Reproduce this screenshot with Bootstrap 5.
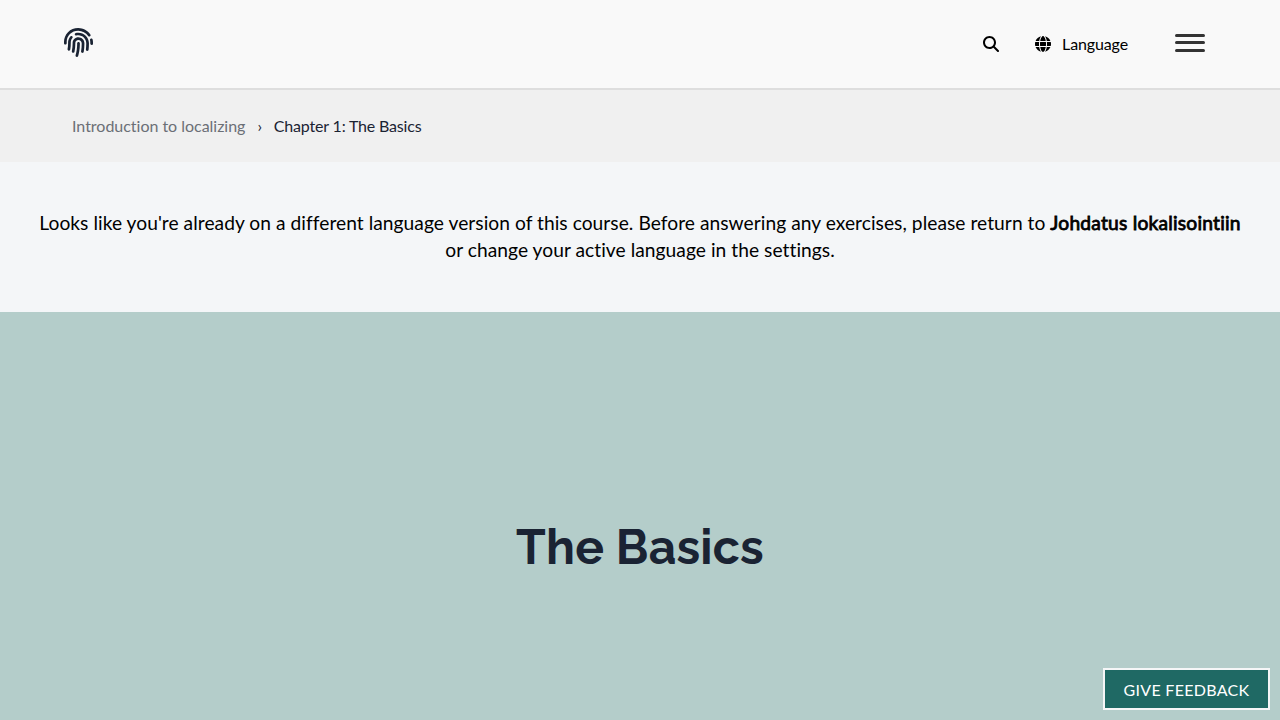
<!DOCTYPE html>
<html lang="en">
<head>
<meta charset="utf-8">
<meta name="viewport" content="width=device-width, initial-scale=1">
<title>The Basics</title>
<link href="https://cdn.jsdelivr.net/npm/bootstrap@5.3.0/dist/css/bootstrap.min.css" rel="stylesheet">
<style>
body { font-family: "Lato", sans-serif; font-size: 16px; color: #000; background: #b4cdca; font-variant-ligatures: none; }
a, .btn { color: inherit; }
svg { display: block; fill: currentColor; }
.topbar { height: 90px; background: #f9f9f9; border-bottom: 2px solid #dedede; padding: 0 75px 0 64px; }
.logo { color: #1a2333; margin-top: -3px; }
.search-btn { margin-right: 36px; }
.lang-btn { gap: 11px; margin-right: 47px; line-height: 24px; letter-spacing: -.12px; }
.menu-btn { width: 30px; margin-top: -2px; }
.menu-btn span { height: 3px; border-radius: 2px; background: #333; }
.menu-btn span:nth-child(2) { margin: 4px 0 5px; }
.crumbs { height: 72px; background: #f0f0f0; padding: 0 72px; color: #1a2333; }
.crumbs .breadcrumb { --bs-breadcrumb-divider: "›"; --bs-breadcrumb-item-padding-x: 12px; --bs-breadcrumb-divider-color: #1a2333; --bs-breadcrumb-item-active-color: #1a2333; }
.crumbs a { color: #6b6f76; letter-spacing: -.02px; }
.crumbs .active { letter-spacing: -.17px; }
.notice { height: 150px; background: #f4f6f8; font-size: 19.2px; line-height: 27px; padding: 47px 32px; letter-spacing: .045px; }
.notice a { -webkit-text-stroke: .8px #000; letter-spacing: .22px; }
.hero { height: 408px; padding-top: 64px; background: #b4cdca; }
.hero h1 { font-family: "Raleway", "Lato", sans-serif; font-size: 48px; font-weight: 700; color: #1a2333; letter-spacing: .2px; }
.feedback { right: 10px; bottom: 10px; width: 167px; height: 42px; background: #1f6964; color: #fff; border: 2px solid #f5f6f7; border-radius: 0; letter-spacing: .3px; padding: 2px 0 0; }
</style>
</head>
<body class="overflow-hidden">
<header class="topbar d-flex align-items-center justify-content-between">
  <a href="#" class="logo" aria-label="Home"><svg width="29" height="29" viewBox="0 0 512 512"><path d="M256.12 245.96c-13.25 0-24 10.74-24 24 1.14 72.25-8.14 141.9-27.7 211.55-2.73 9.72 2.15 30.49 23.12 30.49 10.48 0 20.11-6.92 23.09-17.52 13.53-47.91 31.04-125.41 29.48-224.52.01-13.25-10.73-24-23.99-24zm-.86-81.73C194 164.16 151.25 211.3 152.1 265.32c.75 47.94-3.75 95.91-13.37 142.55-2.69 12.98 5.67 25.69 18.64 28.36 13.05 2.67 25.67-5.66 28.36-18.64 10.34-50.09 15.17-101.58 14.37-153.02-.41-25.95 19.92-52.49 54.45-52.34 31.31.47 57.15 25.34 57.62 55.47.77 48.05-2.81 96.33-10.61 143.55-2.17 13.06 6.69 25.42 19.76 27.58 19.97 3.33 26.81-15.1 27.58-19.77 8.28-50.03 12.06-101.21 11.27-152.11-.88-55.8-47.94-101.88-104.91-102.72zm-110.69-19.78c-10.3-8.34-25.37-6.8-33.76 3.48-25.62 31.5-39.39 71.28-38.75 112 .59 37.58-2.47 75.27-9.11 112.05-2.34 13.05 6.31 25.53 19.36 27.89 20.11 3.5 27.07-14.81 27.89-19.36 7.19-39.84 10.5-80.66 9.86-121.33-.47-29.88 9.2-57.88 28-80.97 8.35-10.28 6.79-25.39-3.49-33.76zm109.47-62.33c-15.41-.41-30.87 1.44-45.78 4.97-12.89 3.06-20.87 15.98-17.83 28.89 3.06 12.89 16 20.83 28.89 17.83 11.05-2.61 22.47-3.77 34-3.69 75.43 1.13 137.73 61.5 138.88 134.58.59 37.88-1.28 76.11-5.58 113.63-1.5 13.17 7.95 25.08 21.11 26.58 16.72 1.95 25.51-11.88 26.58-21.11a929.06 929.06 0 0 0 5.89-119.85c-1.56-98.75-85.07-180.33-186.16-181.83zm252.07 121.45c-2.86-12.92-15.51-21.2-28.61-18.27-12.94 2.86-21.12 15.66-18.26 28.61 4.71 21.41 4.91 37.41 4.7 61.6-.11 13.27 10.55 24.09 23.8 24.2h.2c13.17 0 23.89-10.61 24-23.8.18-22.18.4-44.11-5.83-72.34zm-40.12-90.72C417.29 43.46 337.6 1.29 252.81.02 183.02-.82 118.47 24.91 70.46 72.94 24.09 119.37-.9 181.04.14 246.65l-.12 21.47c-.39 13.25 10.03 24.31 23.28 24.69.23.02.48.02.72.02 12.92 0 23.59-10.3 23.97-23.3l.16-23.64c-.83-52.5 19.16-101.86 56.28-139 38.76-38.8 91.34-59.67 147.68-58.86 69.45 1.03 134.73 35.56 174.62 92.39 7.61 10.86 22.56 13.45 33.42 5.86 10.84-7.62 13.46-22.59 5.84-33.43z"/></svg></a>
  <div class="d-flex align-items-center">
    <button class="btn border-0 p-0 search-btn" aria-label="Search"><svg width="16" height="16" viewBox="0 0 512 512"><path d="M416 208c0 45.900-14.900 88.300-40 122.700L502.600 457.400c12.500 12.500 12.500 32.800 0 45.300s-32.800 12.500-45.300 0L330.700 376c-34.400 25.200-76.800 40-122.700 40C93.100 416 0 322.900 0 208S93.100 0 208 0S416 93.100 416 208zM208 352a144 144 0 1 0 0-288 144 144 0 1 0 0 288z"/></svg></button>
    <button class="btn border-0 p-0 d-flex align-items-center lang-btn"><svg width="16" height="16" viewBox="0 0 512 512"><path d="M352 256c0 22.200-1.200 43.600-3.300 64H163.300c-2.200-20.400-3.300-41.800-3.300-64s1.200-43.600 3.300-64H348.700c2.200 20.400 3.300 41.800 3.300 64zm28.800-64H503.900c5.300 20.500 8.100 41.900 8.100 64s-2.800 43.500-8.100 64H380.800c2.100-20.600 3.200-42 3.200-64s-1.100-43.400-3.200-64zm112.600-32H376.700c-10-63.900-29.800-117.400-55.300-151.600c78.300 20.700 142 77.500 171.900 151.600zm-149.100 0H167.700c6.100-36.400 15.500-68.600 27-94.700c10.500-23.600 22.200-40.700 33.500-51.500C239.400 3.200 248.700 0 256 0s16.600 3.200 27.800 13.800c11.300 10.800 23 27.900 33.500 51.500c11.600 26 20.900 58.200 27 94.700zm-209 0H18.600C48.600 85.900 112.200 29.100 190.600 8.400C165.100 42.600 145.300 96.100 135.300 160zM8.100 192H131.200c-2.100 20.600-3.200 42-3.200 64s1.100 43.400 3.200 64H8.100C2.800 299.500 0 278.100 0 256s2.800-43.500 8.100-64zM194.700 446.600c-11.600-26-20.900-58.200-27-94.600H344.300c-6.100 36.400-15.500 68.600-27 94.600c-10.500 23.600-22.200 40.700-33.500 51.500C272.600 508.800 263.300 512 256 512s-16.600-3.200-27.800-13.800c-11.300-10.800-23-27.900-33.500-51.500zM135.300 352c10 63.900 29.800 117.400 55.300 151.600C112.200 482.900 48.600 426.100 18.600 352H135.300zm358.100 0c-30 74.100-93.600 130.900-171.900 151.600c25.500-34.200 45.200-87.700 55.300-151.600H493.400z"/></svg><span>Language</span></button>
    <button class="btn border-0 p-0 d-flex flex-column menu-btn" aria-label="Menu"><span class="w-100"></span><span class="w-100"></span><span class="w-100"></span></button>
  </div>
</header>
<nav class="crumbs d-flex align-items-center" aria-label="Breadcrumb">
  <ol class="breadcrumb mb-0">
    <li class="breadcrumb-item"><a href="#" class="text-decoration-none">Introduction to localizing</a></li>
    <li class="breadcrumb-item active">Chapter 1: The Basics</li>
  </ol>
</nav>
<div class="notice text-center">Looks like you're already on a different language version of this course. Before answering any exercises, please return to <a href="#" class="text-decoration-none">Johdatus lokalisointiin</a><br>or change your active language in the settings.</div>
<main class="hero d-flex align-items-center justify-content-center"><h1 class="mb-0">The Basics</h1></main>
<button class="btn position-fixed feedback text-uppercase">Give feedback</button>
</body>
</html>
